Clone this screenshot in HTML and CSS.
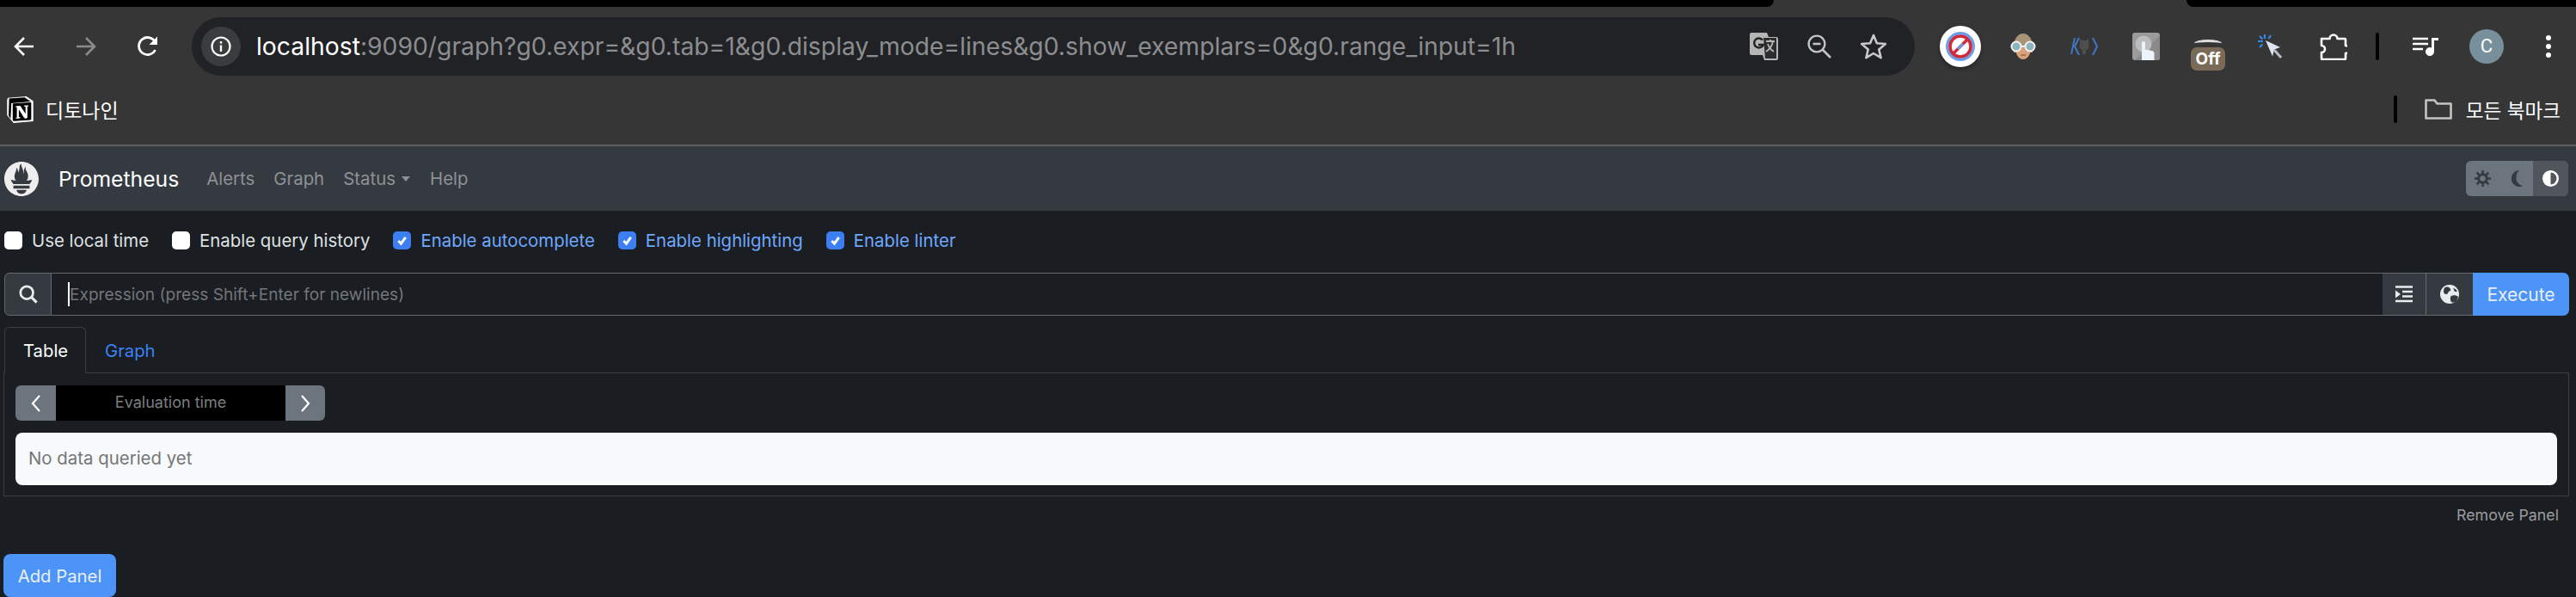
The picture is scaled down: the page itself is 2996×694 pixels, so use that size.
FILE: index.html
```html
<!DOCTYPE html>
<html lang="ko">
<head>
<meta charset="utf-8">
<title>Prometheus Time Series Collection and Processing Server</title>
<link rel="stylesheet" href="styles.css">
</head>
<body>
<div class="browser">
  <div class="bezel"><span class="bezel-left"></span><span class="bezel-right"></span></div>
  <div class="toolbar">
    <svg class="ti ti-back" viewBox="0 0 26 26"><path d="M24 13H3M13 3 3 13l10 10" fill="none" stroke="#fff" stroke-width="2.6"/></svg>
    <svg class="ti ti-forward" viewBox="0 0 26 26"><path d="M2 13h21M13 3l10 10-10 10" fill="none" stroke="#8b8b8b" stroke-width="2.6"/></svg>
    <svg class="ti ti-reload" viewBox="0 0 26 26"><path d="M21.5 17a10 10 0 1 1 .2-8.5" fill="none" stroke="#fff" stroke-width="2.8"/><path d="M24 1.5V11h-9.5z" fill="#fff"/></svg>
    <div class="omnibox">
      <span class="site-info"><svg class="info" viewBox="0 0 24 24"><circle cx="12" cy="12" r="10.5" fill="none" stroke="#fff" stroke-width="2.2"/><rect x="10.8" y="10.5" width="2.4" height="7.5" fill="#fff"/><rect x="10.8" y="6" width="2.4" height="2.6" fill="#fff"/></svg></span>
      <span class="url"><span class="host">localhost</span>:9090/graph?g0.expr=&amp;g0.tab=1&amp;g0.display_mode=lines&amp;g0.show_exemplars=0&amp;g0.range_input=1h</span>
      <svg class="oi oi-translate" viewBox="0 0 34 34"><path d="M2 1h18l2 5h9a2 2 0 0 1 2 2v23a2 2 0 0 1-2 2H17l-2-6H2a2 2 0 0 1-2-2V3a2 2 0 0 1 2-2z" fill="#b5b5b5"/><path d="M16 7h15v24H18z" fill="#2b2c2e"/><path d="M19 11h10M24 9v2M27 11c-1 6-5 10-8 12M21 14c1 4 4 7 7 9" fill="none" stroke="#b5b5b5" stroke-width="1.8"/><path d="M15 9.5a5.5 5.5 0 1 0 .8 5.5H10" fill="none" stroke="#222" stroke-width="2.4"/></svg>
      <svg class="oi oi-zoom" viewBox="0 0 28 28"><circle cx="11" cy="11" r="9.4" fill="none" stroke="#c4c4c4" stroke-width="2.4"/><path d="M6.5 11h9" stroke="#c4c4c4" stroke-width="2.6"/><path d="m18 18 9 9" stroke="#c4c4c4" stroke-width="2.6"/></svg>
      <svg class="oi oi-star" viewBox="0 0 32 32"><path d="m16 3 3.9 9.2 10 .8-7.6 6.5 2.3 9.7-8.6-5.2-8.6 5.2 2.3-9.7L2.1 13l10-.8z" fill="none" stroke="#c9c9c9" stroke-width="2.6" stroke-linejoin="round"/></svg>
    </div>
    <div class="extensions">
      <svg class="ext ext-block" viewBox="0 0 48 48"><circle cx="24" cy="24" r="24" fill="#fff"/><circle cx="24" cy="24" r="17" fill="#6d9eeb"/><circle cx="24" cy="24" r="13.5" fill="#fff"/><circle cx="24" cy="24" r="12" fill="none" stroke="#cf2b3a" stroke-width="3.6"/><path d="m15 33 18-18" stroke="#cf2b3a" stroke-width="3.6"/><path d="m21 27 6-6" stroke="#6d9eeb" stroke-width="3"/></svg>
      <svg class="ext ext-face" viewBox="0 0 30 30"><path d="M4 16C4 6 9 0 15 0s11 6 11 16v6H4z" fill="#a99477"/><path d="M6 17h18c0 7-4 13-9 13S6 24 6 17z" fill="#d9a47a"/><circle cx="7" cy="15" r="5.5" fill="#8cb4bc" stroke="#f2f2f2" stroke-width="2"/><circle cx="23" cy="15" r="5.5" fill="#8cb4bc" stroke="#f2f2f2" stroke-width="2"/><path d="M12 15h6" stroke="#f2f2f2" stroke-width="2"/><path d="M12 25h6" stroke="#a5644a" stroke-width="1.6"/></svg>
      <svg class="ext ext-octo" viewBox="0 0 32 22"><path d="M5 1 1 20M10 1 5 11l5 10M26 1l5 10-5 10" fill="none" stroke="#3e78c4" stroke-width="2"/><path d="M11 8V2l3 2h4l3-2v6c2 4-1 7-3 7v5h-4v-5c-2 0-5-3-3-7z" fill="#4e4e4e"/></svg>
      <svg class="ext ext-touch" viewBox="0 0 32 32"><rect width="32" height="32" rx="3" fill="#9b9b9b"/><path d="M32 3v26a3 3 0 0 1-3 3H3z" fill="#8a8a8a"/><circle cx="13" cy="13" r="9.5" fill="#bdbdbd"/><path d="M11 32V12a2 2 0 0 1 4 0v8l2-.5 1 1 2-.5 1 1 2-.3 2.5 2.3V32z" fill="#edf3fa"/></svg>
      <div class="ext-off"><span class="off-arc"></span><span class="off-badge">Off</span></div>
      <svg class="ext ext-cursor" viewBox="0 0 30 30"><path d="M10 8l17 8-7 2.500-2 8z" fill="#dfe5f0"/><path d="m20 19 8 9" stroke="#b7bdc6" stroke-width="3"/><path d="M9 1v5M16 2l-2.500 4M1 9h6M3 3l3.500 3.500M3 16l3.500-3.500" stroke="#3688e6" stroke-width="2.2"/></svg>
      <svg class="ext ext-puzzle" viewBox="0 0 32 32"><path d="M2 7h9.500a4.500 4.500 0 0 1 9 0H29a1 1 0 0 1 1 1v7a4.500 4.500 0 0 1 0 9v6a1 1 0 0 1-1 1H3a1 1 0 0 1-1-1v-7a4 4 0 0 0 0-8z" fill="none" stroke="#fff" stroke-width="2.6" stroke-linejoin="round"/></svg>
      <span class="tb-divider"></span>
      <svg class="ext ext-music" viewBox="0 0 30 22"><path d="M0 2h18M0 8h18M0 14h12" stroke="#fff" stroke-width="2.6"/><path d="M22 1h8v3h-5v13a5 5 0 1 1-3-4.500z" fill="#fff"/></svg>
      <span class="avatar">C</span>
      <svg class="ext ext-dots" viewBox="0 0 6 26"><circle cx="3" cy="3" r="3" fill="#fff"/><circle cx="3" cy="13" r="3" fill="#fff"/><circle cx="3" cy="23" r="3" fill="#fff"/></svg>
    </div>
  </div>
  <div class="bookmarks">
    <svg class="notion" viewBox="0 0 24 24"><path d="M1 1.300 17.500 0 23.800 4.300v18.200L6 24 .2 17V3z" fill="#fff"/><path d="M2 2 16 1l5.500 3.700L4 6.100l-.6 14L1.600 17.500z" fill="#000"/><path fill="#000" fill-rule="evenodd" d="M5.252 7.288v13.904c0 .747.373 1.027 1.214.98l14.523-.84c.841-.046.935-.56.935-1.167V6.354c0-.606-.233-.933-.748-.887l-15.177.887c-.56.047-.747.327-.747.933zm14.337.745c.093.42 0 .84-.42.888l-.7.14v10.264c-.608.327-1.168.514-1.635.514-.748 0-.935-.234-1.495-.933l-4.577-7.186v6.952L12.210 19s0 .84-1.168.84l-3.222.186c-.093-.186 0-.653.327-.746l.84-.233V9.854L7.822 9.760c-.094-.42.14-1.026.747-1.073l3.456-.233 4.764 7.279v-6.440l-1.215-.139c-.093-.514.28-.887.747-.933z"/></svg>
    <span class="bm-label">디토나인</span>
    <span class="bm-spacer"></span>
    <span class="bm-divider"></span>
    <svg class="folder" viewBox="0 0 32 24"><path d="M1.500 22.500V1.500h10l3 4h16v17z" fill="none" stroke="#c4c4c4" stroke-width="2.6" stroke-linejoin="round"/></svg>
    <span class="bm-all">모든 북마크</span>
  </div>
</div>

<nav class="navbar">
  <svg class="logo" viewBox="0 0 24 24"><path fill="#eee" d="M12 0C5.373 0 0 5.372 0 12c0 6.627 5.373 12 12 12s12-5.373 12-12c0-6.628-5.373-12-12-12zm0 22.460c-1.885 0-3.414-1.260-3.414-2.814h6.828c0 1.553-1.528 2.813-3.414 2.813zm5.640-3.745H6.360v-2.046h11.280v2.046zm-.04-3.098H6.391c-.037-.043-.075-.086-.111-.13-1.155-1.401-1.427-2.133-1.690-2.879-.005-.025 1.400.287 2.395.511 0 0 .513.119 1.262.255-.72-.843-1.147-1.915-1.147-3.010 0-2.406 1.845-4.508 1.180-6.207.648.053 1.340 1.367 1.387 3.422.689-.951.977-2.690.977-3.755 0-1.103.727-2.385 1.454-2.429-.648 1.068.168 1.984.894 4.256.272.854.237 2.290.447 3.201.07-1.892.395-4.652 1.595-5.605-.529 1.200.079 2.702.494 3.424.671 1.164 1.078 2.047 1.078 3.716a4.642 4.642 0 0 1-1.110 2.996c.792-.149 1.340-.283 1.340-.283l2.573-.502s-.374 1.538-1.810 3.019z"/></svg>
  <span class="brand">Prometheus</span>
  <a class="nav-link nav-alerts">Alerts</a>
  <a class="nav-link nav-graph">Graph</a>
  <a class="nav-link nav-status">Status<span class="caret"></span></a>
  <a class="nav-link nav-help">Help</a>
  <div class="theme-toggle">
    <span class="theme-btn theme-light"><svg class="theme-icon" viewBox="0 0 22 22"><circle cx="11" cy="11" r="5.5" fill="none" stroke="#343a40" stroke-width="3.5"/><path d="M11 0v5M11 17v5M0 11h5M17 11h5M3 3l3.500 3.500M15.500 15.500 19 19M3 19l3.500-3.500M15.500 6.500 19 3" stroke="#343a40" stroke-width="3"/></svg></span>
    <span class="theme-btn theme-dark"><svg class="theme-icon" viewBox="0 0 22 22"><path d="M15 0a11 11 0 1 0 5 21c-5-1-9-5-9-10.500C11 6 12 3 15 0z" fill="#343a40"/></svg></span>
    <span class="theme-btn theme-auto"><svg class="theme-icon" viewBox="0 0 22 22"><circle cx="11" cy="11" r="9.500" fill="none" stroke="#fff" stroke-width="3"/><path d="M11 1a10 10 0 0 0 0 20z" fill="#fff"/></svg></span>
  </div>
</nav>

<main class="container">
  <div class="options">
    <label class="option"><span class="check"></span>Use local time</label>
    <label class="option"><span class="check"></span>Enable query history</label>
    <label class="option is-on"><span class="check"><svg viewBox="0 0 20 20"><path d="m6 10.500 3 3 5-7" fill="none" stroke="#fff" stroke-width="2.8"/></svg></span>Enable autocomplete</label>
    <label class="option is-on"><span class="check"><svg viewBox="0 0 20 20"><path d="m6 10.500 3 3 5-7" fill="none" stroke="#fff" stroke-width="2.8"/></svg></span>Enable highlighting</label>
    <label class="option is-on"><span class="check"><svg viewBox="0 0 20 20"><path d="m6 10.500 3 3 5-7" fill="none" stroke="#fff" stroke-width="2.8"/></svg></span>Enable linter</label>
  </div>

  <div class="search-group">
    <span class="addon addon-search"><svg class="addon-icon" viewBox="0 0 24 24"><circle cx="10" cy="10" r="8" fill="none" stroke="#e9ecef" stroke-width="3"/><path d="m15.500 15.500 7 7" stroke="#e9ecef" stroke-width="3.4"/></svg></span>
    <div class="expr"><span class="caret-bar"></span><span class="placeholder">Expression (press Shift+Enter for newlines)</span></div>
    <span class="addon addon-indent"><svg class="addon-icon" viewBox="0 0 20 20"><path d="M0 1.500h20M8 7h12M8 12.500h12M0 18h20" stroke="#e9ecef" stroke-width="2.6"/><path d="M0 5.500 6 10l-6 4.500z" fill="#e9ecef"/></svg></span>
    <span class="addon addon-globe"><svg class="addon-icon globe" viewBox="0 0 22 22"><circle cx="11" cy="11" r="11" fill="#e9ecef"/><path d="M6 3c3-1 5 0 6 2s-1 2-2 3-1 3-3 3-3-2-3-3 0-4 2-5zM13 13c2-1 6-1 8 1l-2 5c-2 2-5 2-6 1s-2-6 0-7zM15 4l3 1 2 3-3 0z" fill="#343a40"/></svg></span>
    <button class="execute">Execute</button>
  </div>

  <div class="tabs">
    <span class="tab is-active">Table</span>
    <span class="tab">Graph</span>
  </div>

  <section class="panel">
    <div class="eval-group">
      <span class="eval-btn"><svg class="chev" viewBox="0 0 12 20"><path d="M10 1 2 10l8 9" fill="none" stroke="#fff" stroke-width="2.2"/></svg></span>
      <span class="eval-input">Evaluation time</span>
      <span class="eval-btn"><svg class="chev" viewBox="0 0 12 20"><path d="m2 1 8 9-8 9" fill="none" stroke="#fff" stroke-width="2.2"/></svg></span>
    </div>
    <div class="alert">No data queried yet</div>
  </section>

  <div class="remove-row"><a class="remove">Remove Panel</a></div>
  <button class="add-panel">Add Panel</button>
</main>
</body>
</html>
```
FILE: styles.css
```css
html, body {
  margin: 0;
  height: 694px;
  overflow: hidden;
  background: #1a1d21;
  font-family: Inter, "Liberation Sans", "Noto Sans CJK KR", sans-serif;
}

/* browser chrome */
.browser {
  height: 168px;
  background: #363636;
  border-bottom: 2px solid #5f5f5f;
}
.bezel {
  display: flex;
  justify-content: space-between;
  height: 8px;
}
.bezel-left, .bezel-right {
  display: block;
  height: 8px;
  background: #000;
}
.bezel-left { width: 2063px; border-bottom-right-radius: 10px; }
.bezel-right { width: 453px; border-bottom-left-radius: 10px; }

.toolbar {
  display: flex;
  align-items: center;
  height: 68px;
  margin-top: 12px;
}
.ti { width: 26px; height: 26px; flex: none; }
.ti-back { margin-left: 15px; }
.ti-forward { margin-left: 46px; }
.ti-reload { margin-left: 46px; }

.omnibox {
  display: flex;
  align-items: center;
  width: 2004px;
  height: 68px;
  margin-left: 38px;
  border-radius: 34px;
  background: #212226;
  flex: none;
}
.site-info {
  display: flex;
  align-items: center;
  justify-content: center;
  width: 46px;
  height: 46px;
  margin-left: 11px;
  border-radius: 50%;
  background: #3b3c3e;
  flex: none;
}
.info { width: 24px; height: 24px; }
.url {
  margin-left: 18px;
  font-size: 28.3px;
  color: #8c8d8f;
  white-space: nowrap;
  flex: 1;
}
.host { color: #fff; }
.oi { flex: none; }
.oi-translate { width: 34px; height: 34px; }
.oi-zoom { width: 28px; height: 28px; margin-left: 33px; }
.oi-star { width: 32px; height: 32px; margin-left: 33px; margin-right: 32px; }

.extensions {
  display: flex;
  align-items: center;
  flex: 1;
  height: 68px;
}
.ext { display: block; flex: none; }
.ext-block { width: 48px; height: 48px; margin-left: 29px; filter: drop-shadow(0 2px 2px rgba(0,0,0,.4)); }
.ext-face { width: 30px; height: 30px; margin-left: 34px; }
.ext-octo { width: 32px; height: 22px; margin-left: 40px; }
.ext-touch { width: 32px; height: 32px; margin-left: 40px; }
.ext-off {
  display: flex;
  flex-direction: column;
  align-items: center;
  width: 40px;
  height: 36px;
  margin-left: 36px;
  margin-top: 20px;
}
.off-arc {
  display: block;
  box-sizing: border-box;
  width: 32px;
  height: 9px;
  border-top: 3px solid #ddd;
  border-radius: 50% 50% 0 0;
}
.off-badge {
  display: block;
  width: 40px;
  height: 27px;
  border-radius: 7px;
  background: #7a6b58;
  color: #fff;
  font-size: 19px;
  font-weight: 700;
  line-height: 27px;
  text-align: center;
}
.ext-cursor { width: 30px; height: 30px; margin-left: 37px; }
.ext-puzzle { width: 32px; height: 32px; margin-left: 43px; }
.tb-divider {
  display: block;
  width: 4px;
  height: 32px;
  margin-left: 33px;
  border-radius: 2px;
  background: #000;
}
.ext-music { width: 30px; height: 22px; margin-left: 39px; }
.avatar {
  display: block;
  width: 40px;
  height: 40px;
  margin-left: 36px;
  border-radius: 50%;
  background: #78909c;
  color: #fff;
  font-family: Roboto, sans-serif;
  font-size: 22px;
  line-height: 40px;
  text-align: center;
  flex: none;
}
.ext-dots { width: 6px; height: 26px; margin-left: 49px; }

.bookmarks {
  display: flex;
  align-items: center;
  height: 78px;
  padding-left: 8px;
}
.notion { width: 31px; height: 31px; flex: none; }
.bm-label {
  margin-left: 14px;
  font-size: 23px;
  color: #fff;
  font-family: "Noto Sans CJK KR", sans-serif;
}
.bm-spacer { flex: 1; }
.bm-divider {
  display: block;
  width: 4px;
  height: 32px;
  border-radius: 2px;
  background: #000;
}
.folder { width: 32px; height: 24px; margin-left: 32px; flex: none; }
.bm-all {
  margin-left: 16px;
  margin-right: 18px;
  font-size: 22.6px;
  color: #fff;
  font-family: "Noto Sans CJK KR", sans-serif;
}

/* app navbar */
.navbar {
  display: flex;
  align-items: center;
  height: 75px;
  padding: 0 9px 0 5px;
  background: #343a40;
}
.logo { width: 40px; height: 40px; flex: none; }
.brand {
  margin-left: 23px;
  font-size: 24.7px;
  color: #fff;
}
.nav-link {
  font-size: 20.4px;
  color: #8d9195;
}
.nav-alerts { margin-left: 32px; }
.nav-graph { margin-left: 22px; }
.nav-status { margin-left: 22px; display: flex; align-items: center; }
.nav-help { margin-left: 23px; }
.caret {
  width: 0;
  height: 0;
  margin-left: 7px;
  border-top: 6px solid #8d9195;
  border-left: 5px solid transparent;
  border-right: 5px solid transparent;
}
.theme-toggle {
  display: flex;
  height: 41px;
  margin-left: auto;
  border-radius: 6px;
  overflow: hidden;
  background: #6c757d;
}
.theme-btn {
  display: flex;
  align-items: center;
  justify-content: center;
  width: 39px;
}
.theme-auto { width: 41px; background: #50565c; }
.theme-icon { width: 19px; height: 19px; }

/* page */
.container { padding: 24px 8px 0 4px; }
.options { display: flex; align-items: center; height: 21px; padding-left: 1px; }
.option {
  display: flex;
  align-items: center;
  margin-right: 27px;
  font-size: 20.4px;
  color: #dfe1e3;
  white-space: nowrap;
}
.check {
  display: block;
  width: 21px;
  height: 21px;
  margin-right: 11px;
  border-radius: 5px;
  background: #fff;
  flex: none;
}
.check svg { display: block; width: 21px; height: 21px; }
.is-on { color: #6ea8fe; }
.is-on .check { background: #3b7ff2; }

.search-group {
  display: flex;
  height: 50px;
  margin-top: 27px;
  box-sizing: border-box;
}
.addon {
  display: flex;
  align-items: center;
  justify-content: center;
  box-sizing: border-box;
  background: #343a40;
  border: 1px solid #666a6e;
  border-width: 1px 1px 1px 0;
  flex: none;
}
.addon-search { width: 55px; margin-left: 1px; border-left-width: 1px; border-radius: 6px 0 0 6px; }
.addon-indent { width: 51px; }
.addon-globe { width: 54px; border-right: 0; }
.addon-icon { width: 20px; height: 20px; }
.addon-search .addon-icon { width: 22px; height: 22px; }
.globe { width: 22px; height: 22px; }
.expr {
  display: flex;
  align-items: center;
  flex: 1;
  border-top: 1px solid #666a6e;
  border-bottom: 1px solid #666a6e;
  padding-left: 19px;
}
.caret-bar { display: block; width: 2px; height: 28px; background: #fff; flex: none; }
.placeholder { font-size: 19.1px; color: #73767a; }
.execute {
  width: 112px;
  height: 50px;
  padding: 0;
  border: 0;
  border-radius: 0 7px 7px 0;
  background: #4d94f8;
  color: #e9eef5;
  font: inherit;
  font-size: 21px;
  flex: none;
}

.tabs { display: flex; margin-top: 13px; padding-left: 1px; height: 54px; }
.tab {
  display: flex;
  align-items: center;
  box-sizing: border-box;
  height: 54px;
  padding: 0 22px;
  color: #3b82f6;
  font-size: 20.3px;
}
.tab.is-active {
  width: 95px;
  padding: 0 21px;
  background: #1a1d21;
  color: #fff;
  border: 1px solid #3a3e42;
  border-bottom: 0;
  border-radius: 6px 6px 0 0;
  position: relative;
  z-index: 1;
}
.panel {
  box-sizing: border-box;
  height: 144px;
  margin-top: -1px;
  padding: 14px 13px 13px;
  border: 1px solid #3a3e42;
}
.eval-group {
  display: flex;
  width: 360px;
  height: 41px;
  border-radius: 6px;
  overflow: hidden;
  background: #000;
}
.eval-btn {
  display: flex;
  align-items: center;
  justify-content: center;
  width: 47px;
  background: #6c757d;
  flex: none;
}
.eval-btn:last-child { width: 46px; }
.chev { width: 12px; height: 20px; }
.eval-input {
  flex: 1;
  color: #7b7e81;
  font-size: 18px;
  line-height: 40px;
  text-align: center;
}
.alert {
  box-sizing: border-box;
  height: 61px;
  margin-top: 14px;
  padding-left: 15px;
  border-radius: 8px;
  background: #f8f9fa;
  color: #747678;
  font-size: 20.4px;
  line-height: 60px;
}
.remove-row {
  display: flex;
  justify-content: flex-end;
  height: 42px;
  align-items: center;
  padding-right: 12px;
}
.remove { font-size: 17.8px; color: #9a9c9e; }
.add-panel {
  display: block;
  width: 131px;
  height: 50px;
  margin-top: 25px;
  padding: 0;
  border: 0;
  border-radius: 8px;
  background: #4d94f8;
  color: #e9eef5;
  font: inherit;
  font-size: 20.3px;
}
```
